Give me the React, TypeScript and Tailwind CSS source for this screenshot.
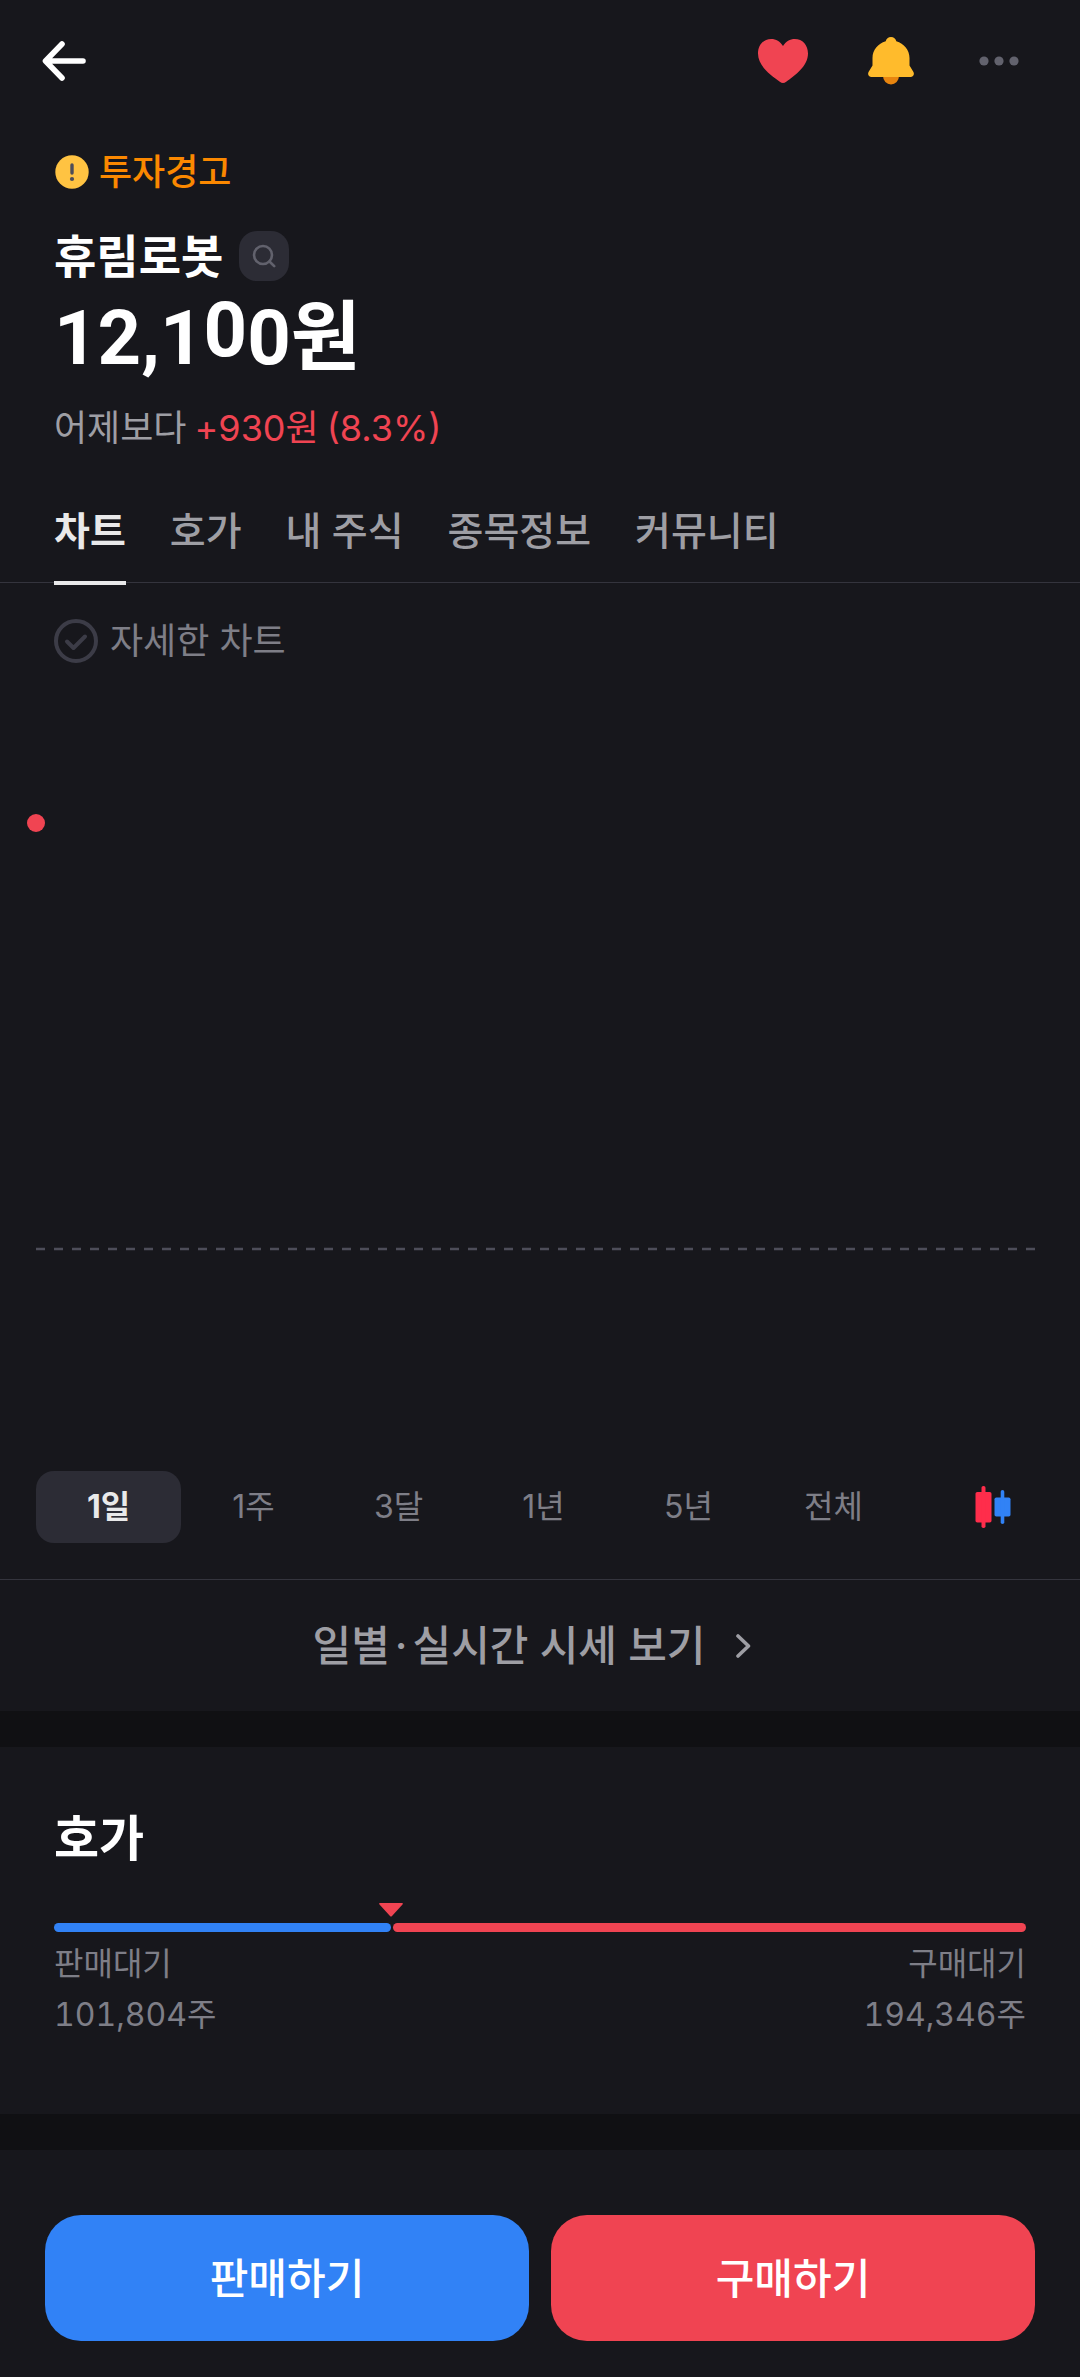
import { useState } from "react";

const tabs = ["차트", "호가", "내 주식", "종목정보", "커뮤니티"];
const periods = ["1일", "1주", "3달", "1년", "5년", "전체"];

const orderBook = {
  sellLabel: "판매대기",
  sellAmount: "101,804주",
  buyLabel: "구매대기",
  buyAmount: "194,346주",
  sellShare: 34.7,
};

function BackIcon() {
  return (
    <svg width="44" height="44" viewBox="0 0 44 44" fill="none" stroke="#fff" strokeWidth="5.6" strokeLinecap="round" strokeLinejoin="round">
      <path d="M20 5 3.500 22 20 39M4 22h37" />
    </svg>
  );
}

function HeartIcon() {
  return (
    <svg width="52" height="46" viewBox="0 0 52 46" fill="#f04452">
      <path d="M26 8C28.800 3.400 33 1 37.800 1 45.500 1 51 7 51 15.500 51 28 38.500 37 29.200 43.800 27 45.400 25 45.400 22.800 43.800 13.500 37 1 28 1 15.500 1 7 6.500 1 14.200 1 19 1 23.200 3.400 26 8Z" />
    </svg>
  );
}

function BellIcon() {
  return (
    <svg width="46" height="48" viewBox="0 0 46 48">
      <path d="M15 39h16a8 8.500 0 0 1-16 0Z" fill="#e8850f" />
      <path
        d="M23 0c2.800 0 4.700 1.700 5.300 4.200C36 6.500 41.500 12.800 41.500 21v7.500l3.800 6.300c1.500 2.500 0 5.200-2.800 5.200h-39C.700 40-.800 37.300.700 34.800l3.800-6.300V21c0-8.200 5.500-14.500 13.200-16.800C18.300 1.700 20.200 0 23 0Z"
        fill="#ffbb2c"
      />
    </svg>
  );
}

function MoreIcon() {
  return (
    <svg width="40" height="10" viewBox="0 0 40 10" fill="#62626d">
      <circle cx="5" cy="5" r="4.600" />
      <circle cx="20" cy="5" r="4.600" />
      <circle cx="35" cy="5" r="4.600" />
    </svg>
  );
}

function WarningIcon() {
  return (
    <svg width="35" height="34" viewBox="0 0 35 34">
      <circle cx="18" cy="17" r="16.700" fill="#ffc342" />
      <path d="M18 10v8" stroke="#4d4d59" strokeWidth="3.400" strokeLinecap="round" />
      <circle cx="18" cy="24" r="2.100" fill="#4d4d59" />
    </svg>
  );
}

function SearchIcon() {
  return (
    <svg width="24" height="24" viewBox="0 0 24 24" fill="none" stroke="#62626d" strokeWidth="2.600" strokeLinecap="round">
      <circle cx="11" cy="11" r="9" />
      <path d="m17.500 17.500 4.700 4.700" />
    </svg>
  );
}

function CandleIcon() {
  return (
    <svg width="36" height="42" viewBox="0 0 36 42">
      <g fill="#ff2d4b">
        <rect x="0.500" y="6" width="16" height="30.500" rx="1.800" />
        <rect x="6.500" y="0" width="4" height="42" rx="1.800" />
      </g>
      <g fill="#3182f6">
        <rect x="19.500" y="11.500" width="16" height="19" rx="1.800" />
        <rect x="25.700" y="4" width="3.600" height="34" rx="1.800" />
      </g>
    </svg>
  );
}

function Header() {
  return (
    <header className="flex h-[122px] items-center justify-between pl-7 pr-[45px]">
      <button aria-label="뒤로" className="flex size-[72px] items-center justify-center">
        <BackIcon />
      </button>
      <div className="flex gap-9">
        <button aria-label="관심" className="flex size-[72px] items-center justify-center">
          <HeartIcon />
        </button>
        <button aria-label="알림" className="flex size-[72px] items-center justify-center">
          <BellIcon />
        </button>
        <button aria-label="더보기" className="flex size-[72px] items-center justify-center">
          <MoreIcon />
        </button>
      </div>
    </header>
  );
}

function Summary() {
  return (
    <section className="px-[54px] pt-6">
      <p className="flex items-center gap-[10px] text-[36px] leading-[52px] font-medium text-[#fb8800]">
        <WarningIcon />
        투자경고
      </p>
      <div className="mt-8 flex items-center gap-4">
        <h1 className="text-[46px] leading-[52px] font-bold">휴림로봇</h1>
        <button aria-label="종목 검색" className="flex size-[50px] items-center justify-center rounded-[18px] bg-[#2c2c35]">
          <SearchIcon />
        </button>
      </div>
      {/* the hundreds digit is still rolling into place */}
      <p className="mt-[10px] font-['Roboto','Noto_Sans_CJK_KR',sans-serif] text-[76px] leading-[92px] font-bold">
        12,1<span className="relative -top-2">0</span>0원
      </p>
      <p className="mt-[18px] flex gap-2 text-[36px] leading-[52px] text-[#9e9ea4]">
        <span>어제보다</span>
        <span className="text-[#f04452]">+930원</span>
        <span className="text-[#f04452]">(8.3%)</span>
      </p>
    </section>
  );
}

function TabBar() {
  const [active, setActive] = useState("차트");
  return (
    <nav className="mt-[49px] flex gap-11 border-b border-[#34343d] px-[54px]">
      {tabs.map((tab) => (
        <button
          key={tab}
          onClick={() => setActive(tab)}
          className={`-mb-[3px] border-b-4 pb-[22px] text-[39px] leading-[56px] ${
            tab === active ? "border-[#e9e9ea] font-bold text-[#e9e9ea]" : "border-transparent font-medium text-[#9e9ea4]"
          }`}
        >
          {tab}
        </button>
      ))}
    </nav>
  );
}

function Chart() {
  const [period, setPeriod] = useState("1일");
  return (
    <section className="pt-8">
      <label className="ml-[54px] flex w-fit items-center gap-3 text-[36px] leading-[52px] text-[#7e7e87]">
        <span className="relative size-11">
          <input type="checkbox" className="block size-11 appearance-none rounded-full border-4 border-[#3c3c47]" />
          <svg className="pointer-events-none absolute inset-0" width="44" height="44" viewBox="0 0 44 44" fill="none" stroke="#3c3c47" strokeWidth="4" strokeLinecap="round" strokeLinejoin="round">
            <path d="m13 22.500 6.500 6.500L31 17.500" />
          </svg>
        </span>
        자세한 차트
      </label>
      <div className="mr-[45px] ml-9">
        <svg className="block w-full overflow-visible" height="804">
          <circle cx="0" cy="156" r="9" fill="#f04452" />
          <line x1="0" y1="582" x2="100%" y2="582" stroke="#4d4d59" strokeWidth="2.500" strokeDasharray="9 9" />
        </svg>
      </div>
      <div className="grid grid-cols-[repeat(6,5fr)_6fr] pb-9 pl-9">
        {periods.map((item) => (
          <button
            key={item}
            onClick={() => setPeriod(item)}
            className={`h-[72px] rounded-[18px] text-[32px] ${
              item === period ? "bg-[#2c2c35] font-bold text-[#e9e9ea]" : "text-[#7e7e87]"
            }`}
          >
            {item}
          </button>
        ))}
        <button aria-label="캔들 차트" className="flex items-center justify-center">
          <CandleIcon />
        </button>
      </div>
      <a href="#quotes" className="flex h-[132px] items-center justify-center gap-[30px] border-t border-[#34343d] pr-4 text-[42px] font-medium text-[#9e9ea4]">
        <span>
          일별<span className="mx-[5px]">·</span>실시간 시세 보기
        </span>
        <svg width="16" height="26" viewBox="0 0 16 26" fill="none" stroke="#9e9ea4" strokeWidth="3.600" strokeLinecap="round" strokeLinejoin="round">
          <path d="m3 3 10.500 10L3 23" />
        </svg>
      </a>
    </section>
  );
}

function OrderBook() {
  return (
    <section className="border-t-[36px] border-[#101013] px-[54px] pt-[60px] pb-[74px]">
      <h2 className="text-[49px] leading-[64px] font-bold">호가</h2>
      <div className="mt-[52px] flex gap-[2px]">
        <div className="relative h-[9px] rounded-full bg-[#3182f6]" style={{ width: `${orderBook.sellShare}%` }}>
          <svg className="absolute -top-5 -right-3" width="24" height="14" viewBox="0 0 24 14" fill="#f04452">
            <path d="M1 0h22q1.500 0 .500 1.500L13 13q-1 1.200-2 0L.500 1.500Q-.500 0 1 0Z" />
          </svg>
        </div>
        <div className="h-[9px] flex-1 rounded-full bg-[#f04452]" />
      </div>
      <div className="mt-[6px] flex justify-between text-[32px] leading-[51px] tabular-nums text-[#7e7e87]">
        <div>
          <p>{orderBook.sellLabel}</p>
          <p>{orderBook.sellAmount}</p>
        </div>
        <div className="text-right">
          <p>{orderBook.buyLabel}</p>
          <p>{orderBook.buyAmount}</p>
        </div>
      </div>
    </section>
  );
}

function TradeButtons() {
  return (
    <footer className="grid grid-cols-2 gap-[22px] border-t-[36px] border-[#101013] px-[45px] pt-[65px] pb-9 text-[42px] font-medium">
      <button className="h-[126px] rounded-[36px] bg-[#3182f6]">판매하기</button>
      <button className="h-[126px] rounded-[36px] bg-[#f04452]">구매하기</button>
    </footer>
  );
}

export default function App() {
  return (
    <main className="min-h-screen bg-[#17171c] font-['Inter','Noto_Sans_CJK_KR',sans-serif] text-white">
      <Header />
      <Summary />
      <TabBar />
      <Chart />
      <OrderBook />
      <TradeButtons />
    </main>
  );
}
